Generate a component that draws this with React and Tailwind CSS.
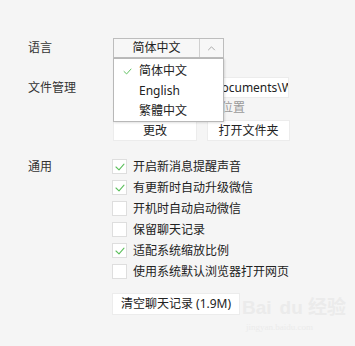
import { useState } from "react";

const OPTIONS = [
  { label: "开启新消息提醒声音", checked: true },
  { label: "有更新时自动升级微信", checked: true },
  { label: "开机时自动启动微信", checked: false },
  { label: "保留聊天记录", checked: false },
  { label: "适配系统缩放比例", checked: true },
  { label: "使用系统默认浏览器打开网页", checked: false },
];

const LANGS = ["简体中文", "English", "繁體中文"];

function Check({ className = "" }) {
  return (
    <svg viewBox="0 0 10 8" className={className} fill="none">
      <polyline
        points="1,4 4,6.8 9,1.2"
        stroke="#5dbf5d"
        strokeWidth="1.1"
        strokeLinecap="round"
        strokeLinejoin="round"
      />
    </svg>
  );
}

function Button({ children, className = "" }) {
  return (
    <button
      className={`h-[21px] bg-white border border-[#ececec] text-[12px] text-[#222] leading-none ${className}`}
    >
      {children}
    </button>
  );
}

export default function App() {
  const [options, setOptions] = useState(OPTIONS);
  const [lang] = useState(0);

  const toggle = (i) =>
    setOptions((prev) =>
      prev.map((o, j) => (j === i ? { ...o, checked: !o.checked } : o)),
    );

  return (
    <div className="relative w-[355px] h-[346px] overflow-hidden bg-[#f5f5f5] text-[12px] text-[#333] font-['Noto_Sans','Noto_Sans_CJK_SC',sans-serif]">
      <div className="pt-[38px] pl-[28px]">
        {/* ── 语言 ── */}
        <div className="flex items-center h-[20px]">
          <span className="w-[85px]">语言</span>
          <div className="flex h-[20px] w-[111px] border border-[#bdbdbd] bg-[#f7f7f7]">
            <div className="w-[85px] flex items-center justify-center text-[#222]">
              {LANGS[lang]}
            </div>
            <div className="flex-1 border-l border-[#d0d0d0] flex items-center justify-center">
              <svg viewBox="0 0 10 6" className="w-[9px] h-[5px]" fill="none">
                <polyline points="1,5 5,1 9,5" stroke="#9a9a9a" strokeWidth="1" />
              </svg>
            </div>
          </div>
        </div>

        {/* ── 文件管理 ── */}
        <div className="flex mt-[19px]">
          <span className="w-[85px] h-[21px] flex items-center">文件管理</span>
          <div className="flex flex-col">
            <div className="w-[176px] h-[21px] bg-white border border-[#ececec] overflow-hidden whitespace-nowrap flex items-center justify-end text-[#222]">
              <span className="-mr-[5px]">C:\Users\Admin\Documents\W</span>
            </div>
            <div className="h-[20px] leading-[20px] text-[#9a9a9a]">
              微信文件的默认保存位置
            </div>
            <div className="flex gap-[10px] mt-[2px]">
              <Button className="w-[84px]">更改</Button>
              <Button className="w-[83px]">打开文件夹</Button>
            </div>
          </div>
        </div>

        {/* ── 通用 ── */}
        <div className="flex mt-[15px]">
          <span className="w-[84px] h-[21px] flex items-center">通用</span>
          <div className="flex flex-col">
            {options.map((o, i) => (
              <label
                key={o.label}
                className="flex items-center h-[21px] gap-[6px] cursor-pointer select-none"
                onClick={() => toggle(i)}
              >
                <span className="w-[15px] h-[15px] bg-white border border-[#dedede] flex items-center justify-center">
                  {o.checked && <Check className="w-[10px] h-[8px]" />}
                </span>
                <span className="text-[#222]">{o.label}</span>
              </label>
            ))}
            <Button className="w-[128px] h-[22px] mt-[11px]">清空聊天记录 (1.9M)</Button>
          </div>
        </div>
      </div>

      {/* ── Dropdown menu ── */}
      <div className="absolute left-[113px] top-[58px] w-[111px] h-[64px] bg-white border border-[#b8b8b8] shadow-[1px_1px_2px_rgba(0,0,0,0.12)] pt-[2px]">
        {LANGS.map((l, i) => (
          <div key={l} className="flex items-center h-[20px] text-[#222]">
            <span className="w-[25px] flex justify-center pl-[2px]">
              {i === lang && <Check className="w-[9px] h-[7px]" />}
            </span>
            <span>{l}</span>
          </div>
        ))}
      </div>

      {/* ── watermark ── */}
      <div className="absolute left-[242px] top-[298px] text-[#ebebeb] leading-none pointer-events-none whitespace-nowrap">
        <div className="text-[19px] font-bold font-['Liberation_Sans','Noto_Sans_CJK_SC',sans-serif]">
          Bai<span className="ml-[8px]">du</span> 经验
        </div>
        <div className="text-[9px] mt-[6px] ml-[4px] font-['Liberation_Serif',serif]">jingyan.baidu.com</div>
      </div>
    </div>
  );
}
